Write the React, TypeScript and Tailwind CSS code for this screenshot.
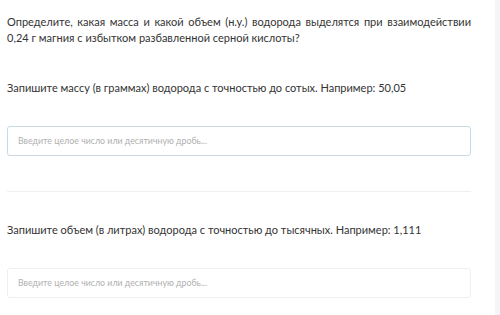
import React from 'react';

const font = { fontFamily: 'Lato, "Open Sans", sans-serif' };

const AnswerInput: React.FC<{ active?: boolean }> = ({ active }) => (
  <div
    className={`h-[30px] flex items-center px-[10px] rounded-[3px] border ${
      active ? 'border-[#c9d9e4]' : 'border-[#efeff2]'
    }`}
  >
    <input
      className="w-full bg-transparent outline-none text-[8.8px] text-[#333] placeholder:text-[#b0b0b0]"
      placeholder="Введите целое число или десятичную дробь..."
    />
  </div>
);

export default function App() {
  return (
    <div className="flex w-[500px] h-[315px] bg-white overflow-hidden" style={font}>
      <div className="w-[495px] pl-[7px] pr-[24px] pt-[14px] text-[11px] leading-[16px] text-[#333]">
        <p className="text-justify [text-align-last:left]">
          Определите, какая масса и какой объем (н.у.) водорода выделятся при взаимодействии 0,24 г
          магния с избытком разбавленной серной кислоты?
        </p>
        <p className="mt-[34px]">
          Запишите массу (в граммах) водорода с точностью до сотых. Например: 50,05
        </p>
        <div className="mt-[30px]">
          <AnswerInput active />
        </div>
        <div className="mt-[35px] h-px bg-[#f0f0f3]" />
        <p className="mt-[30px]">
          Запишите объем (в литрах) водорода с точностью до тысячных. Например: 1,111
        </p>
        <div className="mt-[30px]">
          <AnswerInput />
        </div>
      </div>
      <div className="flex-1 bg-[#f4f5f9]" />
    </div>
  );
}
